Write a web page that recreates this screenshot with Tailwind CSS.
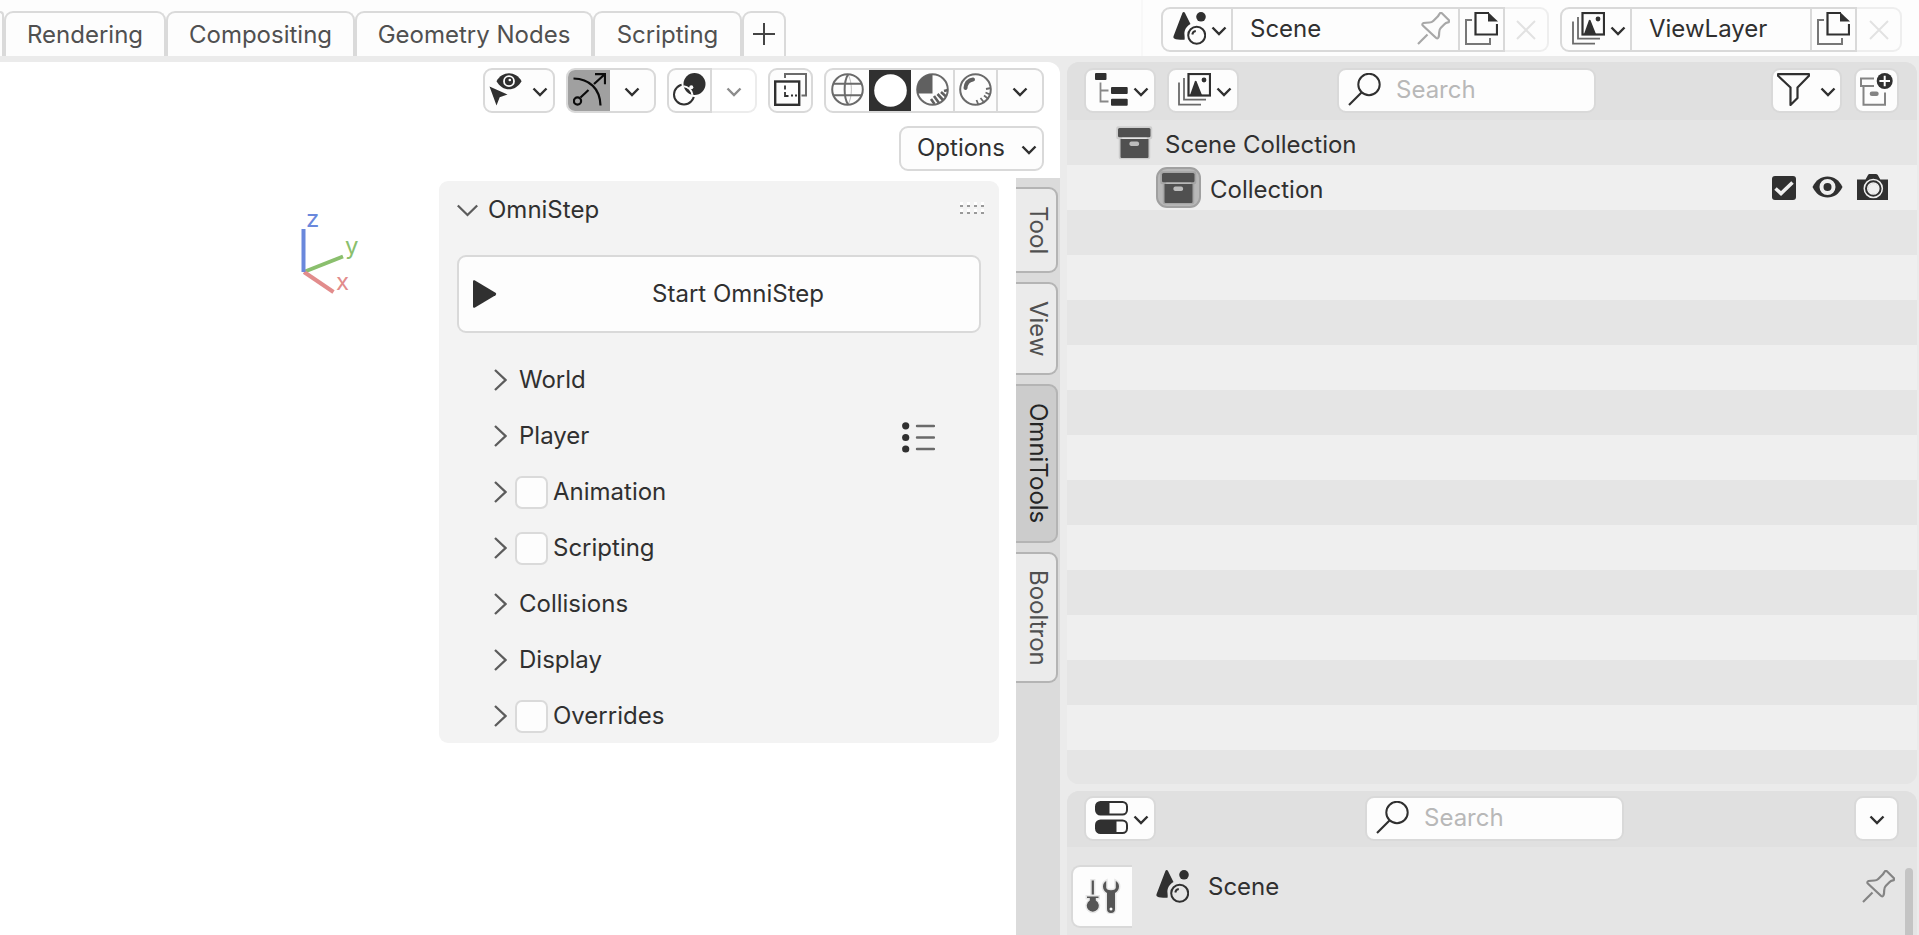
<!DOCTYPE html>
<html lang="en">
<head>
<meta charset="utf-8">
<title>Blender workspace</title>
<script src="https://cdn.jsdelivr.net/npm/@tailwindcss/browser@4"></script>
</head>
<body class="h-screen overflow-hidden flex flex-col bg-[#ebebeb] font-[Inter,sans-serif] text-[24px] leading-[30px] text-[#303030]">

<svg class="hidden" xmlns="http://www.w3.org/2000/svg">
  <symbol id="chev" viewBox="0 0 16 10"><path d="M1.500 1.500 8 8l6.500-6.500" fill="none" stroke="currentColor" stroke-width="2.400"/></symbol>
  <symbol id="right" viewBox="0 0 13 22"><path d="M1 1 11.500 11 1 21" fill="none" stroke="#5c5c5c" stroke-width="2.300"/></symbol>
  <symbol id="scene" viewBox="0 0 33 33">
    <path d="M10.700 0c.6 0 1 .4 1.300 1l5.500 11c-4.500 2.500-6.500 6.500-6 11 .1 1.800.4 3.200 0 4.800-3 .2-8 0-10.300-1.300C.2 25.800.3 25 .6 24L9.400 1c.3-.6.7-1 1.300-1z" fill="#303030"/>
    <circle cx="28" cy="4.800" r="4.800" fill="#303030"/>
    <circle cx="23.700" cy="23.300" r="8.500" fill="none" stroke="#303030" stroke-width="2"/>
    <path d="M19.300 22.500c.3-2 1.500-3.200 3.500-3.500" fill="none" stroke="#303030" stroke-width="2"/>
  </symbol>
  <symbol id="pin" viewBox="0 0 33 33">
    <path d="M1 32l9.500-9.500M23 1.200c.8-.5 1.500-.3 2.200.3l6.500 6.500c.8.900.5 2.200-.8 2.400-1.500.3-2.500.8-3.500 1.800l-3.500 3.500c-1.300 1.300-1.700 2.500-1.700 4.500 0 2 0 3.800-.8 5.300-.6 1-1.800 1-2.500.3L5.800 13.500c-.8-.9-.4-2.200.7-2.500 2-.5 3.800-.5 6-.5 1.700 0 2.700-.5 3.700-1.500l4-4C21.500 3.700 22 2.300 23 1.200z" fill="none" stroke="currentColor" stroke-width="2.200"/>
  </symbol>
  <symbol id="copy" viewBox="0 0 33 33">
    <path d="M7 8H1v24h24v-6" fill="none" stroke="#777" stroke-width="2"/>
    <path d="M24 1H10.500v21.500H32V12" fill="none" stroke="#303030" stroke-width="2.200"/>
    <path d="M23 0 33 9.500H23z" fill="#303030"/>
  </symbol>
  <symbol id="layers" viewBox="0 0 33 33">
    <path d="M6 5v21.700h22M1 9.500v22.200h22" fill="none" stroke="#6a6a6a" stroke-width="1.800"/>
    <rect x="10.500" y="1" width="21.500" height="21.500" fill="none" stroke="#303030" stroke-width="2.200"/>
    <path d="M12 22l4.800-13.500c.5-1 1.300-1 1.800 0L24 22z" fill="#303030"/>
    <circle cx="26" cy="7" r="2.400" fill="#303030"/>
  </symbol>
  <symbol id="search" viewBox="0 0 33 33"><circle cx="21" cy="11.500" r="10.700" fill="none" stroke="#303030" stroke-width="2"/><path d="M1 32 13.500 19.500" stroke="#303030" stroke-width="2.200"/></symbol>
  <symbol id="cross" viewBox="0 0 20 20"><path d="M1 1l18 18M19 1 1 19" stroke="#e2e2e2" stroke-width="2"/></symbol>
  <symbol id="archive" viewBox="-2 -2 37 35">
    <path d="M0 1h32.500v9.500H30.500v20h-28v-20H0z" fill="none" stroke="#000" stroke-opacity=".1" stroke-width="3.500" stroke-linejoin="round"/>
    <rect x="0" y="1" width="32.500" height="9.300" rx="1.500" fill="#505050"/>
    <path d="M2.500 12h28v18a1 1 0 0 1-1 1h-26a1 1 0 0 1-1-1z" fill="#505050"/>
    <rect x="11.500" y="14.500" width="9.500" height="4.500" rx="1.800" fill="#bdbdbd"/>
  </symbol>
</svg>

<!-- Top bar -->
<header class="h-[56px] shrink-0 flex bg-[#fdfdfd] overflow-hidden">
  <nav class="flex-1 flex pt-[11px] text-[#505050] whitespace-nowrap">
    <span class="w-[4px] shrink-0 border-t-2 border-r-2 border-[#dadada] rounded-tr-[9px]"></span>
    <button class="w-[162px] border-2 border-b-0 border-[#dadada] rounded-t-[9px]">Rendering</button>
    <button class="w-[189px] border-2 border-b-0 border-[#dadada] rounded-t-[9px]">Compositing</button>
    <button class="w-[238px] border-2 border-b-0 border-[#dadada] rounded-t-[9px]">Geometry Nodes</button>
    <button class="w-[149px] border-2 border-b-0 border-[#dadada] rounded-t-[9px]">Scripting</button>
    <button class="w-[44px] border-2 border-b-0 border-[#dadada] rounded-t-[9px] flex justify-center pt-[10px]" aria-label="Add workspace"><svg class="size-[22px]" viewBox="0 0 22 22"><path d="M11 0v22M0 11h22" stroke="#444" stroke-width="2"/></svg></button>
  </nav>
  <div class="flex items-start gap-[11px] pt-[7px] pr-[17px] pl-[18px] border-l-2 border-[#f8f8f8]">
    <div class="flex h-[45px]">
      <button class="w-[72px] border-2 border-[#d9d9d9] rounded-l-[9px] flex items-center justify-end gap-[5px] pr-[4px] pb-[3px]" aria-label="Browse scene"><svg class="size-[33px]"><use href="#scene"/></svg><svg class="w-[16px] h-[10px] mt-[6px]"><use href="#chev"/></svg></button>
      <div class="w-[225px] border-y-2 border-[#d9d9d9] flex items-center justify-between pl-[17px] pr-[8px] pb-[2px]"><input class="w-[140px] outline-none" aria-label="Scene name" value="Scene"><button aria-label="Pin scene" class="text-[#a8a8a8]"><svg class="size-[33px]"><use href="#pin"/></svg></button></div>
      <button class="w-[47px] border-2 border-[#d9d9d9] flex items-center justify-center pb-[2px]" aria-label="New scene"><svg class="size-[33px]"><use href="#copy"/></svg></button>
      <button class="w-[44px] border-2 border-l-0 border-[#eee] rounded-r-[9px] flex items-center justify-center" aria-label="Delete scene"><svg class="size-[20px]"><use href="#cross"/></svg></button>
    </div>
    <div class="flex h-[45px]">
      <button class="w-[72px] border-2 border-[#d9d9d9] rounded-l-[9px] flex items-center justify-end gap-[5px] pr-[4px] pb-[3px]" aria-label="Browse view layer"><svg class="size-[33px]"><use href="#layers"/></svg><svg class="w-[16px] h-[10px] mt-[6px]"><use href="#chev"/></svg></button>
      <div class="w-[178px] border-y-2 border-[#d9d9d9] flex items-center pl-[17px] pb-[2px]"><input class="w-[140px] outline-none" aria-label="View layer name" value="ViewLayer"></div>
      <button class="w-[47px] border-2 border-[#d9d9d9] flex items-center justify-center pb-[2px]" aria-label="New view layer"><svg class="size-[33px]"><use href="#copy"/></svg></button>
      <button class="w-[45px] border-2 border-l-0 border-[#eee] rounded-r-[9px] flex items-center justify-center" aria-label="Delete view layer"><svg class="size-[20px]"><use href="#cross"/></svg></button>
    </div>
  </div>
</header>

<div class="flex-1 min-h-0 flex gap-[7px] pt-[6px]">

  <!-- 3D viewport -->
  <main class="flex-1 bg-white rounded-tr-[12px] flex flex-col overflow-hidden">
    <div class="flex justify-end gap-[11px] pt-[6px] pr-[16px]">
      <button class="w-[72px] h-[45px] border-2 border-[#d9d9d9] rounded-[9px] bg-[#fdfdfd] flex items-center gap-[10px] pl-[4px] pb-[2px]" aria-label="Object visibility">
        <svg class="size-[33px]" viewBox="0 0 33 33"><path d="M7.500 8.200C10.500 3 15 .3 20 .3s9.500 2.700 12.600 7.900C29.500 13.400 25 16.300 20 16.300S10.500 13.400 7.500 8.200z" fill="#303030"/><circle cx="20" cy="8.200" r="5" fill="#303030" stroke="#fdfdfd" stroke-width="1.800"/><circle cx="20.800" cy="7" r="1.300" fill="#fdfdfd"/><path d="M.5 13.500 18.500 21.500l-7.800 2.800L7.500 32.500z" fill="#303030"/></svg>
        <svg class="w-[16px] h-[10px] mt-[4px]"><use href="#chev"/></svg></button>
      <div class="flex h-[45px] w-[90px] border-2 border-[#d9d9d9] rounded-[9px] bg-[#fdfdfd] overflow-hidden">
        <button class="w-[42px] bg-[#a0a0a0] flex items-center justify-center pb-[2px]" aria-label="Show gizmos"><svg class="size-[33px]" viewBox="0 0 33 33" fill="none" stroke="#0b0b0b" stroke-width="2.200"><path d="M.5 5.500C16 6 27 15 27.500 32.500M21 11 31.500 1.500M22 1.200h10v10M7.500 24.500 15.500 17"/><circle cx="4.500" cy="28" r="3.600"/></svg></button>
        <button class="flex-1 flex items-center justify-center pt-[2px]" aria-label="Gizmo options"><svg class="w-[16px] h-[10px]"><use href="#chev"/></svg></button>
      </div>
      <div class="flex h-[45px] w-[90px]">
        <button class="w-[45px] border-2 border-[#d9d9d9] rounded-l-[9px] bg-[#fdfdfd] flex items-center justify-center pb-[2px]" aria-label="Show overlays"><svg class="size-[33px]" viewBox="0 0 33 33"><circle cx="11" cy="21.500" r="10" fill="none" stroke="#303030" stroke-width="2"/><circle cx="21.500" cy="11" r="13" fill="#fdfdfd"/><circle cx="21.500" cy="11" r="11" fill="#303030"/><path d="M10.500 13.200A10 10 0 0 1 19.500 21.800" fill="none" stroke="#fdfdfd" stroke-width="2"/><path d="M11.500 14.500a9 9 0 0 1 6.500 6.500 11 11 0 0 1-6.500-6.500z" fill="#303030"/><circle cx="18.300" cy="14.300" r="2" fill="#fdfdfd"/></svg></button>
        <button class="flex-1 border-2 border-l-0 border-[#ececec] rounded-r-[9px] flex items-center justify-center pt-[2px] text-[#8c8c8c]" aria-label="Overlay options"><svg class="w-[16px] h-[10px]"><use href="#chev"/></svg></button>
      </div>
      <button class="w-[45px] h-[45px] border-2 border-[#d9d9d9] rounded-[9px] bg-[#fdfdfd] flex items-center justify-center pb-[2px]" aria-label="Toggle X-ray"><svg class="size-[33px]" viewBox="0 0 33 33" fill="none"><path d="M11 5V1h21v21.500h-4.500" stroke="#6a6a6a" stroke-width="2"/><rect x="1.200" y="8.500" width="24" height="23.300" stroke="#303030" stroke-width="2.400"/><path d="M11 12.500v4M11 19v4h3.500M17 22.500h2M21 22.500h2" stroke="#303030" stroke-width="1.800"/></svg></button>
      <div class="flex h-[45px] w-[220px] border-2 border-[#d9d9d9] rounded-[9px] bg-[#fdfdfd] overflow-hidden">
        <button class="w-[43px] flex items-center justify-center pb-[2px]" aria-label="Wireframe shading"><svg class="size-[33px]" viewBox="0 0 33 33" fill="none" stroke="#6a6a6a" stroke-width="2"><circle cx="16.500" cy="16.500" r="15.300"/><path d="M3 10.700h27M2.500 22.300h28M17 1.500C12.500 9 12.500 24 17 31.500"/><path d="M17 1.500C21.500 9 21.500 24 17 31.500" stroke-width="1" stroke-opacity=".45"/></svg></button>
        <button class="w-[42px] bg-[#303030] flex items-center justify-center" aria-label="Solid shading"><svg class="size-[33px]" viewBox="0 0 33 33"><circle cx="16.500" cy="16.500" r="16.300" fill="#fff"/></svg></button>
        <button class="w-[44px] border-r-2 border-[#d9d9d9] flex items-center justify-center pb-[2px]" aria-label="Material preview"><svg class="size-[33px]" viewBox="0 0 33 33"><circle cx="16.500" cy="16.500" r="15.300" fill="none" stroke="#6a6a6a" stroke-width="2"/><path d="M16.500 1v19.500H1.500A15.300 15.300 0 0 1 16.500 1z" fill="#606060"/><path d="M28 18l4-1M25 19l5 4.500M21.500 21l5.500 6M18 23l5 7M15 26l3.500 5" stroke="#606060" stroke-width="2.600"/></svg></button>
        <button class="w-[43px] border-r-2 border-[#d9d9d9] flex items-center justify-center pb-[2px]" aria-label="Rendered shading"><svg class="size-[33px]" viewBox="0 0 33 33"><circle cx="16.500" cy="16.500" r="15.300" fill="none" stroke="#6a6a6a" stroke-width="2"/><path d="M6.500 15C7 10 10 7 14 6.500" fill="none" stroke="#606060" stroke-width="4" stroke-linecap="round"/><path d="M27 16l5-1M26.500 19.500l4.500 2M25 22.500l4.500 3.500M21.500 25l4 5M17.500 27l2 5" stroke="#6a6a6a" stroke-width="1.800"/></svg></button>
        <button class="flex-1 flex items-center justify-center pt-[2px]" aria-label="Shading options"><svg class="w-[16px] h-[10px]"><use href="#chev"/></svg></button>
      </div>
    </div>
    <div class="flex justify-end pt-[13px] pr-[16px]">
      <button class="w-[145px] h-[45px] border-2 border-[#d9d9d9] rounded-[9px] bg-[#fdfdfd] flex items-center justify-between pl-[16px] pr-[5px]"><span class="pb-[2px]">Options</span><svg class="w-[16px] h-[10px] mt-[2px]"><use href="#chev"/></svg></button>
    </div>

    <div class="flex-1 min-h-0 flex justify-end items-start pt-[7px]">
      <svg class="w-[110px] h-[120px] mt-[12px] mr-[49px]" viewBox="0 0 110 120" font-family="Inter, sans-serif" font-size="24">
        <path d="M25 81.500 63 66.500" stroke="#8abf6d" stroke-width="4"/><path d="M24 82 53.500 102" stroke="#e28c8c" stroke-width="4"/><path d="M23.500 39v43" stroke="#6a88dc" stroke-width="4"/>
        <text x="26" y="37" fill="#6a88dc">z</text><text x="65" y="64" fill="#8abf6d">y</text><text x="56" y="100" fill="#e28c8c">x</text>
      </svg>

      <section class="w-[560px] h-[562px] mt-[3px] rounded-[9px] bg-[#f3f3f3] pl-[18px] pr-[15px]">
        <div class="h-[74px] flex items-center pb-[17px]">
          <button class="flex-1 flex items-center gap-[10px]"><svg class="w-[21px] h-[13px] mt-[2px]" viewBox="0 0 21 13"><path d="M.8 1.500 10.500 11l9.700-9.500" fill="none" stroke="#5c5c5c" stroke-width="2.300"/></svg>OmniStep</button>
          <svg class="w-[24px] h-[12px] mb-[3px]" viewBox="0 0 24 12"><path d="M0 1.500h24M0 8.500h24" stroke="#fff" stroke-width="3" stroke-dasharray="3 4"/><path d="M0 4h24M0 11h24" stroke="#999" stroke-width="2" stroke-dasharray="3 4"/></svg>
        </div>
        <div class="pr-[3px]">
          <button class="w-full h-[78px] border-2 border-[#d9d9d9] rounded-[9px] bg-[#fdfdfd] flex items-center pl-[14px]"><svg class="w-[24px] h-[28px]" viewBox="0 0 24 28"><path d="M0 1.500C0 .4 1 0 2 .5l20.500 12.300c.9.600.9 1.800 0 2.400L2 27.500c-1 .5-2 .1-2-1z" fill="#303030"/></svg><span class="flex-1 text-center">Start OmniStep</span></button>
        </div>
        <ul class="pt-[19px] pl-[37px]">
          <li class="h-[56px] flex items-center"><button class="flex items-center gap-[12px]"><svg class="w-[13px] h-[22px]"><use href="#right"/></svg>World</button></li>
          <li class="h-[56px] flex items-center justify-between pr-[49px]"><button class="flex items-center gap-[12px]"><svg class="w-[13px] h-[22px]"><use href="#right"/></svg>Player</button>
            <button class="pt-[2px]" aria-label="Player presets"><svg class="w-[33px] h-[31px]" viewBox="0 0 33 31"><g fill="#303030"><circle cx="3.700" cy="3.800" r="3.600"/><circle cx="3.700" cy="15.500" r="3.600"/><circle cx="3.700" cy="27" r="3.600"/></g><path d="M15 4h17M15 15.500h17M15 27h17" stroke="#6a6a6a" stroke-width="2.400" stroke-linecap="round"/></svg></button></li>
          <li class="h-[56px] flex items-center"><button aria-label="Expand Animation"><svg class="w-[13px] h-[22px]"><use href="#right"/></svg></button><input id="an" type="checkbox" class="appearance-none size-[33px] ml-[8px] mr-[5px] border-2 border-[#dadada] rounded-[7px] bg-[#fdfdfd]"><label for="an">Animation</label></li>
          <li class="h-[56px] flex items-center"><button aria-label="Expand Scripting"><svg class="w-[13px] h-[22px]"><use href="#right"/></svg></button><input id="sc" type="checkbox" class="appearance-none size-[33px] ml-[8px] mr-[5px] border-2 border-[#dadada] rounded-[7px] bg-[#fdfdfd]"><label for="sc">Scripting</label></li>
          <li class="h-[56px] flex items-center"><button class="flex items-center gap-[12px]"><svg class="w-[13px] h-[22px]"><use href="#right"/></svg>Collisions</button></li>
          <li class="h-[56px] flex items-center"><button class="flex items-center gap-[12px]"><svg class="w-[13px] h-[22px]"><use href="#right"/></svg>Display</button></li>
          <li class="h-[56px] flex items-center"><button aria-label="Expand Overrides"><svg class="w-[13px] h-[22px]"><use href="#right"/></svg></button><input id="ov" type="checkbox" class="appearance-none size-[33px] ml-[8px] mr-[5px] border-2 border-[#dadada] rounded-[7px] bg-[#fdfdfd]"><label for="ov">Overrides</label></li>
        </ul>
      </section>

      <!-- Sidebar tabs -->
      <nav class="self-stretch w-[44px] ml-[17px] pr-[2px] pt-[9px] bg-[#dbdbdb] flex flex-col gap-[9px] text-[#505050]">
        <button class="h-[86px] pl-[4px] border-2 border-l-0 border-[#b4b4b4] rounded-r-[9px] bg-[#ebebeb] flex items-center justify-center"><span class="[writing-mode:vertical-rl]">Tool</span></button>
        <button class="h-[93px] pl-[4px] border-2 border-l-0 border-[#b4b4b4] rounded-r-[9px] bg-[#ebebeb] flex items-center justify-center"><span class="[writing-mode:vertical-rl]">View</span></button>
        <button class="h-[159px] pl-[4px] border-2 border-l-0 border-[#b4b4b4] rounded-r-[9px] bg-[#cccccc] text-[#242424] flex items-center justify-center"><span class="[writing-mode:vertical-rl]">OmniTools</span></button>
        <button class="h-[131px] pl-[4px] border-2 border-l-0 border-[#b4b4b4] rounded-r-[9px] bg-[#ebebeb] flex items-center justify-center"><span class="[writing-mode:vertical-rl]">Booltron</span></button>
      </nav>
    </div>
  </main>

  <aside class="w-[852px] shrink-0 pr-[2px] flex flex-col gap-[7px]">
    <!-- Outliner -->
    <section class="flex-1 min-h-0 rounded-[12px] overflow-hidden bg-[#e5e5e5] flex flex-col">
      <div class="h-[58px] shrink-0 bg-[#e0e0e0] flex pt-[6px] pl-[17px] pr-[18px]">
        <button class="w-[72px] h-[45px] border-2 border-[#d9d9d9] rounded-[9px] bg-[#fdfdfd] flex items-center justify-end gap-[5px] pr-[5px] pb-[2px]" aria-label="Editor type"><svg class="size-[33px]" viewBox="0 0 33 33"><path d="M5.500 9.500v19h8M5.500 17.500h8" fill="none" stroke="#888" stroke-width="1.800"/><g fill="#303030"><rect width="11.500" height="7" rx="1"/><rect x="16" y="14" width="16.700" height="7" rx="1"/><rect x="16" y="25.800" width="16.700" height="7" rx="1"/></g></svg><svg class="w-[16px] h-[10px] mt-[4px]"><use href="#chev"/></svg></button>
        <button class="w-[72px] h-[45px] ml-[11px] border-2 border-[#d9d9d9] rounded-[9px] bg-[#fdfdfd] flex items-center justify-end gap-[5px] pr-[5px] pb-[2px]" aria-label="Display mode"><svg class="size-[33px]"><use href="#layers"/></svg><svg class="w-[16px] h-[10px] mt-[4px]"><use href="#chev"/></svg></button>
        <label class="w-[259px] h-[45px] ml-[98px] border-2 border-[#d9d9d9] rounded-[9px] bg-[#fdfdfd] flex items-center pl-[9px] pb-[2px]"><svg class="size-[33px]"><use href="#search"/></svg><input class="w-[190px] ml-[15px] outline-none placeholder:text-[#b8b8b8]" placeholder="Search" aria-label="Search outliner"></label>
        <button class="w-[71px] h-[45px] ml-auto border-2 border-[#d9d9d9] rounded-[9px] bg-[#fdfdfd] flex items-center justify-between pl-[4px] pr-[4px] pb-[2px]" aria-label="Filter"><svg class="size-[33px]" viewBox="0 0 33 33"><path d="M1 1.200h31v1.500L20.500 14.500V25l-7 7V14.500L1 2.700z" fill="none" stroke="#303030" stroke-width="2.200" stroke-linejoin="round"/></svg><svg class="w-[16px] h-[10px] mt-[4px]"><use href="#chev"/></svg></button>
        <button class="w-[45px] h-[45px] ml-[12px] border-2 border-[#d9d9d9] rounded-[9px] bg-[#fdfdfd] flex items-center justify-center pb-[2px]" aria-label="New collection"><svg class="size-[33px]" viewBox="0 0 33 33"><path d="M14 5.500H1v7.500h13M3.500 13v18.700h21.500V19.500" fill="none" stroke="#848484" stroke-width="2"/><rect x="9.700" y="18.500" width="9" height="4.500" rx="2.200" fill="#848484"/><circle cx="24.700" cy="8" r="8" fill="#303030"/><path d="M24.700 2.700v10.600M19.400 8H30" stroke="#fff" stroke-width="2"/></svg></button>
      </div>
      <div class="h-[45px] shrink-0 flex items-center pl-[49px]"><svg class="w-[37px] h-[35px]"><use href="#archive"/></svg><span class="ml-[12px] pt-[4px]">Scene Collection</span></div>
      <div class="h-[45px] shrink-0 flex items-center pl-[89px] bg-[#efefef]">
        <span class="w-[45px] h-[41px] border-2 border-[#a0a0a0] rounded-[11px] bg-[#b8b8b8] flex items-center justify-center"><svg class="w-[37px] h-[35px]"><use href="#archive"/></svg></span>
        <span class="ml-[9px] pt-[4px]">Collection</span>
        <span class="ml-auto grid">
          <input type="checkbox" checked aria-label="Exclude from view layer" class="appearance-none size-[24px] rounded-[3px] bg-[#303030] [grid-area:1/1]">
          <svg class="size-[24px] pointer-events-none [grid-area:1/1]" viewBox="0 0 24 24"><path d="M3.500 12.500l5.500 5L20.500 6.500" fill="none" stroke="#efefef" stroke-width="3.600"/></svg>
        </span>
        <button class="ml-[16px] pb-[2px]" aria-label="Hide in viewport"><svg class="w-[31px] h-[22px]" viewBox="0 0 31 22"><path d="M.5 11C4 4 9 .5 15.500.5S27 4 30.500 11C27 18 22 21.500 15.500 21.500S4 18 .5 11z" fill="#303030"/><circle cx="15.500" cy="11" r="6" fill="none" stroke="#efefef" stroke-width="4"/></svg></button>
        <button class="ml-[14px] mr-[29px] pb-[2px]" aria-label="Disable in renders"><svg class="w-[31px] h-[26px]" viewBox="0 0 31 26"><path d="M0 5.500h8.500L11 1c.5-.8 1-1 1.800-1h6c.8 0 1.500.3 2 1l2.500 4.500H31V26H0z" fill="#303030"/><circle cx="16.300" cy="14.500" r="7.300" fill="#303030" stroke="#efefef" stroke-width="5"/><circle cx="16.300" cy="14.500" r="7.300" fill="none" stroke="#303030" stroke-width="2"/><circle cx="16.300" cy="14.500" r="5.200" fill="#efefef"/></svg></button>
      </div>
      <div class="flex-1 bg-[repeating-linear-gradient(#e5e5e5_0px_45px,#efefef_45px_90px)]"></div>
    </section>

    <!-- Properties -->
    <section class="h-[144px] shrink-0 rounded-t-[12px] overflow-hidden bg-[#e5e5e5] flex flex-col">
      <div class="h-[56px] shrink-0 bg-[#e0e0e0] flex pt-[5px] pl-[17px] pr-[18px]">
        <button class="w-[72px] h-[45px] border-2 border-[#d9d9d9] rounded-[9px] bg-[#fdfdfd] flex items-center justify-end gap-[5px] pr-[5px] pb-[2px]" aria-label="Editor type"><svg class="size-[33px]" viewBox="0 0 33 33"><g fill="none" stroke="#303030" stroke-width="2"><rect x="1" y="1" width="31" height="12.500" rx="4.500"/><rect x="1" y="19.500" width="31" height="12.500" rx="4.500"/></g><path d="M14.500 1v12.500h-9A4.500 4.500 0 0 1 1 9V5.500A4.500 4.500 0 0 1 5.500 1zM21.500 19.500V32h-16A4.500 4.500 0 0 1 1 27.500V24a4.500 4.500 0 0 1 4.500-4.500z" fill="#303030"/></svg><svg class="w-[16px] h-[10px] mt-[4px]"><use href="#chev"/></svg></button>
        <label class="w-[259px] h-[45px] ml-[209px] border-2 border-[#d9d9d9] rounded-[9px] bg-[#fdfdfd] flex items-center pl-[9px] pb-[2px]"><svg class="size-[33px]"><use href="#search"/></svg><input class="w-[190px] ml-[15px] outline-none placeholder:text-[#b8b8b8]" placeholder="Search" aria-label="Search properties"></label>
        <button class="w-[45px] h-[45px] ml-auto border-2 border-[#d9d9d9] rounded-[9px] bg-[#fdfdfd] flex items-center justify-center pt-[2px]" aria-label="Options"><svg class="w-[16px] h-[10px]"><use href="#chev"/></svg></button>
      </div>
      <div class="flex-1 flex items-start pl-[4px] pr-[4px] pt-[18px]">
        <button class="w-[61px] h-[63px] border-2 border-r-0 border-[#d9d9d9] rounded-l-[9px] bg-[#fdfdfd] flex items-center pl-[12px] pb-[2px]" aria-label="Tool"><svg class="size-[36px]" viewBox="0 0 36 36"><g fill="#555" stroke="#000" stroke-opacity=".09" stroke-width="3" paint-order="stroke"><path d="M6.700 2.500h2.200v14H6.700zM2 18.500h11.500V20H10.800v2.500a6 6 0 1 1-6 0V20H2z"/><path d="M21.200 3v6.500c0 1.500 1.500 2.700 4.800 2.700s4.800-1.200 4.800-2.700V3c2 1 3.200 3 3.200 5.500 0 3-1.500 5-4 6.500V31a4 4 0 0 1-8 0V15c-2.500-1.500-4-3.500-4-6.500C18 6 19.200 4 21.200 3z"/></g><circle cx="26" cy="31" r="1.500" fill="#fdfdfd"/></svg></button>
        <svg class="size-[33px] ml-[24px] mt-[5px]"><use href="#scene"/></svg>
        <span class="ml-[19px] mt-[7px]">Scene</span>
        <button class="ml-auto mt-[5px] text-[#848484]" aria-label="Pin"><svg class="size-[33px]"><use href="#pin"/></svg></button>
        <div class="w-[8px] h-[90px] ml-[10px] mt-[3px] rounded-t-[4px] bg-[#c4c4c4]"></div>
      </div>
    </section>
  </aside>
</div>
</body>
</html>
